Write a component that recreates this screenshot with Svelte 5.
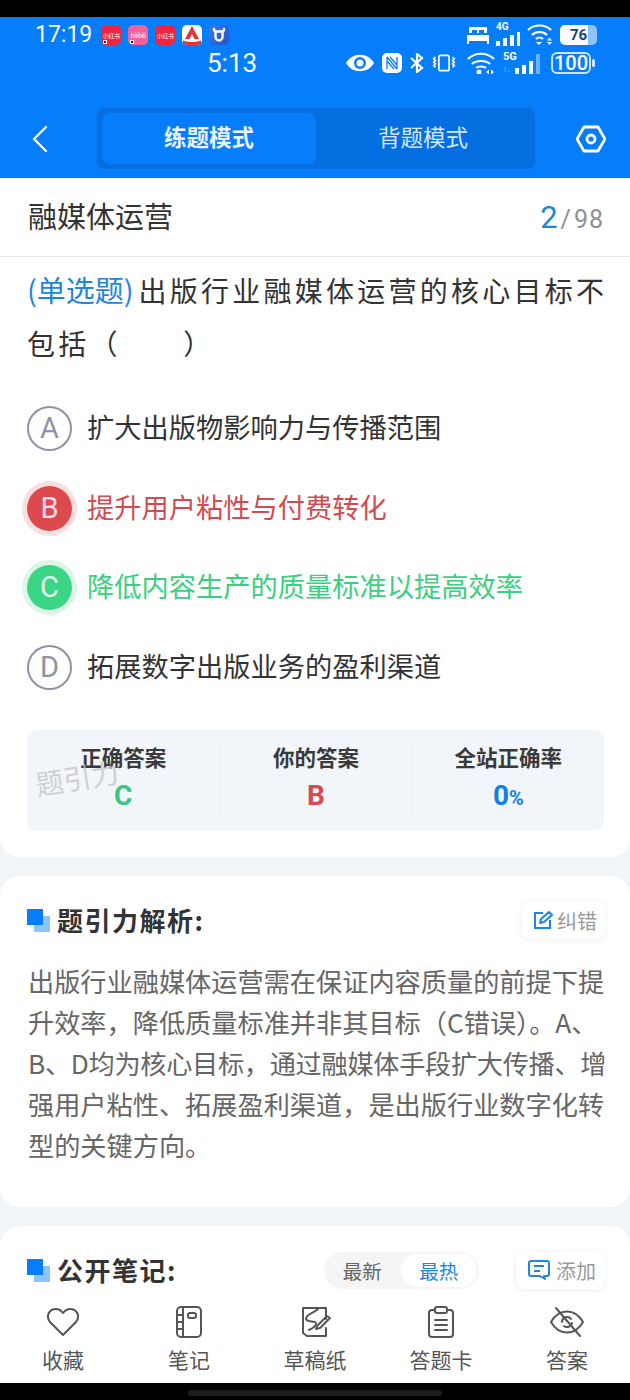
<script>
  const options = [
    { key: "A", text: "扩大出版物影响力与传播范围", state: "" },
    { key: "B", text: "提升用户粘性与付费转化", state: "wrong" },
    { key: "C", text: "降低内容生产的质量标准以提高效率", state: "right" },
    { key: "D", text: "拓展数字出版业务的盈利渠道", state: "" },
  ];
  const stats = [
    { label: "正确答案", value: "C", cls: "right" },
    { label: "你的答案", value: "B", cls: "wrong" },
    { label: "全站正确率", value: "0", cls: "rate" },
  ];
  const tabs = ["收藏", "笔记", "草稿纸", "答题卡", "答案"];
</script>

<div class="phone">
  <div class="notch"></div>
  <header class="head">
    <div class="status">
      <span class="time">17:19</span>
      <div class="apps">
        <span class="app red tagged">小红书</span>
        <span class="app pink tagged">bilibili</span>
        <span class="app red">小红书</span>
        <span class="app white">
          <svg viewBox="0 0 20 20" width="20" height="20"><path d="M10 1 3 14h4.500L10 9l2.500 5H17z" fill="#e5333b"/><path d="M1 15.500c6 2 12 2 18 0V20H1z" fill="#e5333b"/></svg>
        </span>
        <span class="app navy">
          <svg viewBox="0 0 20 20" width="20" height="20" fill="none" stroke="#fff" stroke-width="2.400" stroke-linecap="round"><path d="M5 4c0 2 1 2.500 2 2.500h6c1 0 2-.5 2-2.500M6.500 7v5a3.500 3.500 0 0 0 7 0V7"/></svg>
        </span>
      </div>
      <div class="sys top-sys">
        <svg viewBox="0 0 22 18" width="22" height="18" fill="#fff"><path d="M3 1h16a1 1 0 0 1 1 1v5H2V2a1 1 0 0 1 1-1z"/><path d="M0 9h22v9h-2v-3H2v3H0z"/><path d="M5 4h5v3H5zM12 4h5v3h-5z" fill="#067dfb"/></svg>
        <span class="sig">
          <b>4G</b>
          <svg viewBox="0 0 24 14" width="24" height="14" fill="#fff"><rect x="0" y="9" width="4" height="5"/><rect x="7" y="6" width="4" height="8"/><rect x="14" y="3" width="4" height="11"/><rect x="21" y="0" width="3" height="14"/></svg>
        </span>
        <svg viewBox="0 0 26 22" width="26" height="22" fill="none" stroke="#fff" stroke-width="2.200"><path d="M1 6c6-6 17-6 23 0M5 11c4-4 11-4 15 0M9 15c2-2 5-2 7 0"/><path d="M9 18h6l-3 3z" fill="#fff" stroke="none"/><path d="M20 16.500h5l-2.500-3zM20 18h5l-2.500 3z" fill="#fff" stroke="none"/></svg>
        <span class="batt-fill"><i>76</i></span>
      </div>
    </div>
    <div class="status second">
      <span class="time inner">5:13</span>
      <div class="sys low-sys">
        <svg viewBox="0 0 28 18" width="28" height="18"><path d="M0 9c6-11 22-11 28 0-6 11-22 11-28 0z" fill="#fff"/><circle cx="14" cy="9" r="6" fill="#067dfb"/><circle cx="14" cy="9" r="3.500" fill="#fff"/></svg>
        <svg viewBox="0 0 20 20" width="20" height="22"><rect x="0" y="0" width="20" height="20" rx="5" fill="#fff"/><path d="M5 4v12M15 4v12M5 4l10 12M5 8l7 8M8 4l7 8" stroke="#067dfb" stroke-width="1.300" fill="none"/></svg>
        <svg viewBox="0 0 14 20" width="14" height="20" fill="none" stroke="#fff" stroke-width="2.200"><path d="M1 5l11 10-5 4V1l5 4L1 15"/></svg>
        <svg viewBox="0 0 28 20" width="24" height="20" fill="none" stroke="#fff" stroke-width="2"><rect x="8" y="1" width="12" height="18" rx="2"/><path d="M4 3l-2 2 2 2-2 2 2 2-2 2 2 2M24 3l2 2-2 2 2 2-2 2 2 2-2 2"/></svg>
        <svg class="wifi2" viewBox="0 0 28 22" width="28" height="22" fill="none" stroke="#fff" stroke-width="2.200"><path d="M1 7c7-7 19-7 26 0M5 12c4-4 14-4 18 0M9 16c2-2 8-2 10 0"/><circle cx="12" cy="20" r="2.500" fill="#fff" stroke="none"/><path d="M19 20l3-2.500v5zM27 20l-3-2.500v5z" fill="#fff" stroke="none"/></svg>
        <span class="sig five">
          <b>5G</b>
          <em>1↓</em>
          <svg viewBox="0 0 26 20" width="26" height="20" fill="#fff"><rect x="0" y="14" width="4" height="6"/><rect x="7" y="11" width="4" height="9"/><rect x="14" y="7" width="4" height="13"/><rect x="21" y="0" width="4" height="20" opacity=".4"/></svg>
        </span>
        <span class="batt-line">100</span>
      </div>
    </div>
    <nav class="bar">
      <svg class="back" viewBox="0 0 16 28" width="16" height="28" fill="none" stroke="#fff" stroke-width="2.400" stroke-linecap="round" stroke-linejoin="round"><path d="M14 2 2 14l12 12"/></svg>
      <div class="modes">
        <span class="mode on">练题模式</span>
        <span class="mode">背题模式</span>
      </div>
      <svg class="gear" viewBox="0 0 30 28" width="30" height="28" fill="none" stroke="#fff" stroke-width="2.800" stroke-linejoin="round"><path d="M8 2h14l7 12-7 12H8L1 14z"/><circle cx="15" cy="14" r="4"/></svg>
    </nav>
  </header>

  <main class="body">
    <div class="title-row">
      <span class="title">融媒体运营</span>
      <span class="count"><em>2</em><i>/</i>98</span>
    </div>

    <section class="card question">
      <p class="stem"><span class="kind">(单选题)</span>出版行业融媒体运营的核心目标不包括（　　）</p>
      <ul class="opts">
        {#each options as o}
          <li class="opt {o.state}">
            <span class="dot">{o.key}</span>
            <span class="opt-text">{o.text}</span>
          </li>
        {/each}
      </ul>
      <div class="stats">
        {#each stats as s}
          <div class="stat">
            <span class="stat-label">{s.label}</span>
            <span class="stat-value {s.cls}">{s.value}{#if s.cls === "rate"}<small>%</small>{/if}</span>
          </div>
        {/each}
      </div>
      <span class="mark">题引力</span>
    </section>

    <section class="card analysis">
      <div class="sec-head">
        <span class="squares"></span>
        <h2>题引力解析:</h2>
        <button class="chip">
          <svg viewBox="0 0 20 20" width="20" height="20" fill="none" stroke="#1f86dc" stroke-width="2"><path d="M10 3H2v15h15v-8"/><path d="M7 13l1-4 8-7 3 3-8 7z" stroke-linejoin="round"/></svg>
          纠错
        </button>
      </div>
      <p class="explain">出版行业融媒体运营需在保证内容质量的前提下提升效率，降低质量标准并非其目标（C错误）。A、<span class="tight">B、D均为核心目标，通过融媒体手段扩大传播、增</span>强用户粘性、拓展盈利渠道，是出版行业数字化转型的关键方向。</p>
    </section>

    <section class="card notes">
      <div class="sec-head">
        <span class="squares"></span>
        <h2>公开笔记:</h2>
        <div class="sort">
          <span>最新</span>
          <span class="hot">最热</span>
        </div>
        <button class="chip add">
          <svg viewBox="0 0 22 20" width="22" height="20" fill="none" stroke="#1f86dc" stroke-width="2"><path d="M3 1h16a2 2 0 0 1 2 2v11a2 2 0 0 1-2 2h-3l1 3-5-3H3a2 2 0 0 1-2-2V3a2 2 0 0 1 2-2z" stroke-linejoin="round"/><path d="M6 6h10M6 11h6"/></svg>
          添加
        </button>
      </div>
    </section>
  </main>

  <footer class="tabs">
    {#each tabs as t, i}
      <div class="tab">
        <svg viewBox="0 0 34 34" width="34" height="34" fill="none" stroke="#555" stroke-width="2" stroke-linejoin="round" stroke-linecap="round">
          {#if i === 0}
            <path d="M17 30 4 17C-1 10 4 4 10 4c3 0 5 1.500 7 4 2-2.500 4-4 7-4 6 0 11 6 6 13z"/>
          {:else if i === 1}
            <rect x="5" y="2" width="24" height="30" rx="4"/><path d="M11 2v30M5 10h6M5 17h6M5 24h6"/><rect x="16" y="8" width="8" height="5" rx="2"/>
          {:else if i === 2}
            <path d="M28 14V3H5v25l4 3h19v-8"/><path d="M20 4c-4 4-13 6-12 10s11 1 10 5-6 5-7 6"/><path d="M19 21l10-10 3 2-10 10-4 1z"/>
          {:else if i === 3}
            <path d="M11 5H8a3 3 0 0 0-3 3v21a3 3 0 0 0 3 3h18a3 3 0 0 0 3-3V8a3 3 0 0 0-3-3h-3"/><rect x="11" y="2" width="12" height="6" rx="2"/><path d="M11 15h12M11 20h12M11 25h12"/>
          {:else}
            <path d="M1 17c8-14 24-14 32 0-8 14-24 14-32 0z"/><path d="M12 17a5 5 0 0 1 9-3M22 18a5 5 0 0 1-8 3"/><path d="M6 3l24 28"/>
          {/if}
        </svg>
        <span>{t}</span>
      </div>
    {/each}
  </footer>
  <div class="gesture"><span></span></div>
</div>

<style>
  :global(body) { margin: 0; background: #000; }
  .phone {
    width: 630px;
    height: 1400px;
    display: flex;
    flex-direction: column;
    overflow: hidden;
    background: #f2f5f8;
    font-family: "Noto Sans CJK SC", "Noto Sans", sans-serif;
    color: #333;
  }
  .notch { height: 17px; background: #000; flex-shrink: 0; }
  .head { height: 161px; flex-shrink: 0; background: #067dfb; color: #fff; display: flex; flex-direction: column; }
  .status { display: flex; align-items: center; height: 30px; padding: 3px 34px 0 35px; }
  .status.second { height: 30px; padding: 0 35px 4px 35px; box-sizing: border-box; }
  .time { font: 400 23px/30px "Roboto", sans-serif; }
  .time.inner { margin-left: 172px; font-size: 26px; }
  .apps { display: flex; gap: 7px; margin-left: 9px; }
  .app {
    position: relative;
    width: 20px; height: 20px; border-radius: 5px;
    display: flex; align-items: center; justify-content: center;
    font-size: 6px; letter-spacing: -.3px; color: #fff; overflow: hidden; white-space: nowrap;
  }
  .tagged::after {
    content: ""; position: absolute; left: 2px; bottom: 1px;
    width: 4px; height: 4px; background: #222; border: 1px solid #fff; box-sizing: border-box;
  }
  .red { background: #f0243f; }
  .pink { background: #f4619a; }
  .white { background: #fff; }
  .navy { background: linear-gradient(135deg, #3b78ee, #1f55c8); }
  .sys { margin-left: auto; display: flex; align-items: center; }
  .top-sys { gap: 7px; }
  .low-sys { gap: 8px; }
  .wifi2 { margin-left: 3px; }
  .sig { position: relative; display: flex; align-items: flex-end; height: 22px; }
  .sig b { position: absolute; left: 0; top: -3px; font: 700 10px/12px "Roboto", sans-serif; }
  .five { width: 38px; justify-content: flex-end; margin-left: 0; }
  .five b { top: -1px; font-size: 11px; }
  .five em { position: absolute; left: 0; bottom: 0; font: 400 7px/8px "Roboto", sans-serif; opacity: .45; }
  .batt-fill {
    width: 37px; height: 20px; border-radius: 5px;
    background: linear-gradient(90deg, #fff 76%, #8ec3fb 76%);
    display: flex; align-items: center; justify-content: center;
    margin-right: -1px;
  }
  .batt-fill i { font: 700 15px/20px "Roboto", sans-serif; color: #173f86; }
  .batt-line {
    position: relative;
    width: 40px; height: 22px; box-sizing: border-box; margin: 0 4px 0 2px;
    border: 2px solid #cfe5fd; border-radius: 6px;
    font: 500 20px/18px "Roboto", sans-serif; text-align: center; color: #fff;
  }
  .batt-line::after {
    content: ""; position: absolute; right: -6px; top: 5px;
    width: 3px; height: 8px; border-radius: 2px; background: #cfe5fd;
  }
  .bar { display: flex; align-items: center; height: 61px; margin-top: 28px; padding: 0 24px 0 32px; }
  .back { flex-shrink: 0; }
  .modes {
    width: 438px; height: 61px; margin-left: 49px; padding: 5px; box-sizing: border-box;
    background: #056ee0; border-radius: 8px; display: flex;
  }
  .mode { flex: 1; font-size: 22.500px; line-height: 47px; text-align: center; color: #d5e8fd; }
  .mode.on { background: #067dfb; border-radius: 8px; color: #eaf4ff; font-weight: 700; height: 51px; }
  .gear { margin-left: auto; }

  .body { flex: 1; min-height: 0; overflow: hidden; }
  .title-row {
    height: 79px; box-sizing: border-box; padding: 0 26px 0 28px;
    background: #fff; border-bottom: 1px solid #e6e6e6;
    display: flex; align-items: center; justify-content: space-between;
  }
  .title { font-size: 29px; color: #333; margin-bottom: 4px; }
  .count { font: 400 25px/32px "Roboto", sans-serif; color: #8c9097; letter-spacing: 1px; margin-top: 4px; }
  .count em { font-style: normal; font-size: 31px; color: #1f86dc; }
  .count i { font-style: normal; margin: 0 2px; }
  .card { background: #fff; border-radius: 20px; margin-bottom: 19px; position: relative; }
  .question { border-radius: 0 0 20px 20px; padding: 6px 26px 27px 27px; height: 600px; box-sizing: border-box; }
  .stem { margin: 0 -10px 0 0; font-size: 28px; line-height: 53px; letter-spacing: 3.250px; color: #333; }
  .kind { color: #1f86dc; letter-spacing: 0; font-size: 29px; margin-right: 5px; }
  .opts { list-style: none; margin: 36px 0 0; padding: 0; display: flex; flex-direction: column; gap: 34.600px; }
  .opt { display: flex; align-items: center; gap: 15px; height: 45px; font-size: 27.250px; color: #333; }
  .opt-text { margin-top: -5px; }
  .dot {
    width: 45px; height: 45px; box-sizing: border-box; flex-shrink: 0;
    border: 2px solid #8e93a5; border-radius: 50%;
    font: 400 29px/41px "Roboto", sans-serif; text-align: center; color: #8e93a5;
  }
  .opt.wrong { color: #d24b4f; }
  .opt.right { color: #3ad080; }
  .wrong .dot { background: #dc4a4d; border: none; line-height: 45px; color: #fde; box-shadow: 0 0 0 5px #f9dfe0; }
  .right .dot { background: #3ad585; border: none; line-height: 45px; color: #e6fff2; box-shadow: 0 0 0 5px #dcf7e8; }
  .stats {
    margin-top: 40px; height: 101px; background: #f2f5f9; border-radius: 10px;
    display: grid; grid-template-columns: repeat(3, 1fr); align-items: center;
  }
  .stat { display: flex; flex-direction: column; align-items: center; border-left: 1px solid #ecf0f4; height: 70px; }
  .stat:first-child { border-left: none; }
  .stat-label { font-size: 21.500px; line-height: 32px; font-weight: 700; color: #3a3a3a; margin: -4px 0 4px; }
  .stat-value { font: 700 28px/38px "Roboto", sans-serif; }
  .stat-value small { font-size: 20px; }
  .stat-value.right { color: #3ac680; }
  .stat-value.wrong { color: #d9484d; }
  .stat-value.rate { color: #0f7fe8; }
  .mark { position: absolute; left: 35px; top: 500px; font-size: 28px; color: #c4c4c4; opacity: .75; transform: rotate(-9deg); }

  .analysis { height: 331px; box-sizing: border-box; padding: 23px 25px 0 27px; }
  .sec-head { display: flex; align-items: center; height: 40px; }
  .squares {
    width: 23px; height: 23px; flex-shrink: 0; margin: 3px 7px 0 0;
    background: linear-gradient(#067dfb, #067dfb) 0 0 / 16px 16px no-repeat,
      linear-gradient(#8cc4fb, #8cc4fb) 7px 7px / 16px 16px no-repeat;
  }
  h2 { margin: 0; font-size: 26px; font-weight: 700; color: #333; letter-spacing: 1.500px; }
  .chip {
    margin: 2px 0 0 auto; display: flex; align-items: center; gap: 4px;
    height: 37px; padding: 0 8px 0 11px; border: none; border-radius: 8px;
    background: #fff; box-shadow: 0 1px 6px rgba(0, 0, 0, .08);
    font: 400 20px "Noto Sans CJK SC", sans-serif; color: #9a9a9a;
  }
  .explain { margin: 22px -13px 0 1px; font-size: 26.200px; line-height: 41px; color: #666; }
  .tight { letter-spacing: -.3px; }

  .notes { padding: 23px 25px 0 27px; height: 100px; box-sizing: border-box; }
  .sort {
    margin: 2px 0 0 auto; width: 155px; height: 37px; border-radius: 19px; background: #f5f5f5;
    display: flex; align-items: center; font-size: 19.500px; color: #666;
  }
  .sort span { flex: 1; text-align: center; line-height: 33px; }
  .sort .hot { background: #fff; border-radius: 17px; color: #1f86dc; margin-right: 2px; }
  .chip.add { margin-left: 37px; padding: 0 9px 0 12px; gap: 6px; }

  .tabs { height: 87px; flex-shrink: 0; background: #fff; display: grid; grid-template-columns: repeat(5, 1fr); position: relative; }
  .tab { display: flex; flex-direction: column; align-items: center; padding-top: 9px; font-size: 21px; line-height: 30px; color: #555; gap: 5px; }
  .gesture { height: 17px; flex-shrink: 0; background: #000; display: flex; justify-content: center; align-items: flex-end; }
  .gesture span { width: 254px; height: 6px; border-radius: 3px; background: #1c1c1c; margin-bottom: 4px; }
</style>
